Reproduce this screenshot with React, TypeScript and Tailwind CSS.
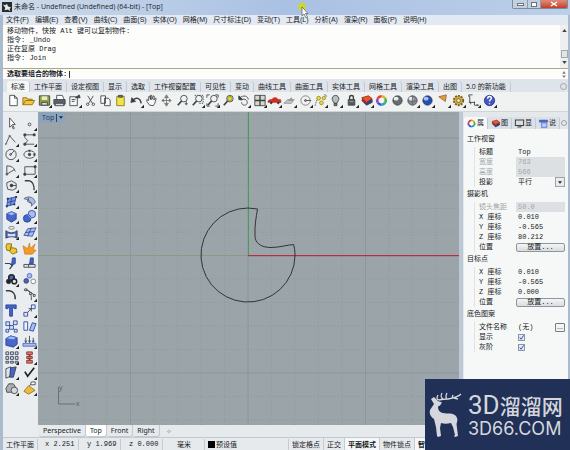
import React from 'react';

interface Tool {
  label: string;
  art: React.ReactNode;
  more?: boolean;
}

interface Field {
  label: string;
  value?: string;
  kind?: 'text' | 'disabled' | 'select' | 'button' | 'file' | 'check';
}

interface FieldGroup {
  title: string;
  fields: Field[];
}

const menus = [
  '文件(F)', '编辑(E)', '查看(V)', '曲线(C)', '曲面(S)', '实体(O)', '网格(M)',
  '尺寸标注(D)', '变动(T)', '工具(L)', '分析(A)', '渲染(R)', '面板(P)', '说明(H)',
];

const toolTabs = [
  '标准', '工作平面', '设定视图', '显示', '选取', '工作视窗配置', '可见性', '变动',
  '曲线工具', '曲面工具', '实体工具', '网格工具', '渲染工具', '出图', '5.0 的新功能',
];

const history = ['移动物件，快按 Alt 键可以复制物件:', '指令: _Undo', '正在复原 Drag', '指令: Join'];

const groups: FieldGroup[] = [
  {
    title: '工作视窗',
    fields: [
      { label: '标题', value: 'Top' },
      { label: '宽度', value: '763', kind: 'disabled' },
      { label: '高度', value: '566', kind: 'disabled' },
      { label: '投影', value: '平行', kind: 'select' },
    ],
  },
  {
    title: '摄影机',
    fields: [
      { label: '镜头焦距', value: '50.0', kind: 'disabled' },
      { label: 'X 座标', value: '0.010' },
      { label: 'Y 座标', value: '-0.565' },
      { label: 'Z 座标', value: '80.212' },
      { label: '位置', value: '放置...', kind: 'button' },
    ],
  },
  {
    title: '目标点',
    fields: [
      { label: 'X 座标', value: '0.010' },
      { label: 'Y 座标', value: '-0.565' },
      { label: 'Z 座标', value: '0.000' },
      { label: '位置', value: '放置...', kind: 'button' },
    ],
  },
  {
    title: '底色图案',
    fields: [
      { label: '文件名称', value: '(无)', kind: 'file' },
      { label: '显示', kind: 'check' },
      { label: '灰阶', kind: 'check' },
    ],
  },
];

const ink = '#3b4045';
const blue = '#4666c8';
const pale = '#a9bdf0';

const sphere = (fill: string, shine: string) => (
  <>
    <circle cx="8" cy="8" r="5" fill={fill} stroke="#2c2f36" strokeWidth="0.7" />
    <ellipse cx="6.5" cy="6" rx="2.6" ry="2" fill={shine} stroke="none" />
  </>
);

const magnifier = (
  <>
    <circle cx="9.5" cy="6" r="3.5" fill="#eef3f7" />
    <path d="M7 8.5 3 13" strokeWidth="1.8" />
  </>
);

const colorWheel = (
  <g fill="none" strokeWidth="2.6">
    <path d="M8 3.5a4.5 4.5 0 0 1 3.9 2.2" stroke="#e8b020" />
    <path d="M11.9 5.7a4.5 4.5 0 0 1 0 4.6" stroke="#46b23c" />
    <path d="M11.9 10.3A4.5 4.5 0 0 1 8 12.5" stroke="#28a3b4" />
    <path d="M8 12.5a4.5 4.5 0 0 1-3.9-2.2" stroke="#3658c8" />
    <path d="M4.1 10.3a4.5 4.5 0 0 1 0-4.6" stroke="#a83bb0" />
    <path d="M4.1 5.7A4.5 4.5 0 0 1 8 3.5" stroke="#dc3a2c" />
  </g>
);

const layersArt = (
  <>
    <path d="m3 8 5 5 6-3V7z" fill="#2c3f96" />
    <path d="m3 5 5 5 6-4-4-3z" fill="#e4572f" stroke="#a02318" />
    <path d="m3 5 5 5v2L3 7z" fill="#b8271c" stroke="none" />
  </>
);

const mainTools: Tool[] = [
  { label: '新建', art: <path d="M4 2.5h5l3 3v8H4zM9 2.5v3h3" fill="#fff" /> },
  { label: '打开', art: <path d="M2 12.5V5h4l1 1.5h5V8h2.5L12 12.5zM2 12.5 5 8h7" fill="#f2c53d" stroke="#8b6912" /> },
  { label: '保存', more: true, art: (<><path d="M2.5 3h11v10h-11z" fill="#8f9e39" /><path d="M5 3.5h6v4H5z" fill="#e4eac2" stroke="none" /><path d="M5 10h6v3H5z" fill="#d9dde0" /></>) },
  { label: '打印', art: (<><path d="M5 7V2.5h6L13 7" fill="#fff" /><path d="M2 7h12v5H2z" fill="#5c636b" /><path d="M4 11h8l1 2.5H3z" fill="#d8dcdf" /></>) },
  { label: '文件属性', more: true, art: (<><path d="M3 4h8v9.5H3z" fill="#f5f7f8" /><path d="M5 7h4M5 9h3M9 5l4-3 1 3z" fill="#454a50" /></>) },
  { label: '剪切', art: (<><path d="m5 3 5 8m1-8-5 8" /><circle cx="5" cy="12" r="1.3" /><circle cx="11" cy="12" r="1.3" /></>) },
  { label: '复制', art: <path d="M3 3h5v8H3zM7 5.5h4l2 2v6H7z" fill="#f8f9fa" /> },
  { label: '粘贴', art: (<><path d="M4 3.5h8v10H4z" fill="#f2e34a" stroke="#81751b" /><path d="M6 2.5h4v2H6z" fill="#777" /></>) },
  { label: '复原', more: true, art: (<><path d="M4 8c3-4 8-3 9 3" strokeWidth="1.6" /><path d="M2 10 3 5l4 4z" fill={ink} /></>) },
  { label: '平移', art: <path d="M6 13 3 9V7l2 1V4l1-1 1 4V2.5h1.3V7L10 3l1 .5-.5 4 1.5-2 1 .5-1.5 5-1.5 2.5z" fill="#f6f7f7" /> },
  { label: '旋转视图', art: <path d="M8 2v12M3 8h10M8 2 6 5h4zM8 14l-2-3h4zM3 8l2-1.5v3zM13 8l-2-1.5v3z" fill="#888" stroke="#777" /> },
  { label: '动态缩放', art: (<>{magnifier}<path d="M12 9v4M10.5 11.5h3" /></>) },
  { label: '框选缩放', more: true, art: (<><path d="M5 2.5h9V11H9" strokeDasharray="1.5 1" />{magnifier}</>) },
  { label: '缩放至范围', more: true, art: (<><path d="M2 5V2h3m6 0h3v3m0 6v3h-3M5 14H2v-3" />{magnifier}</>) },
  { label: '缩放选取', art: (<>{magnifier}<circle cx="9.5" cy="6" r="2.5" fill="#d8d72e" stroke="#8e8c28" /></>) },
  { label: '复原视图', more: true, art: (<><path d="M4 5c4-3 9-2 9 2m-8 1c3-3 7-1 7 2 0 4-6 4-6 0" /><path d="M3 3v4h4z" fill={ink} /></>) },
  { label: '四个视窗', more: true, art: (<><path d="M3 2.5h11v11H3z" fill="#d6d8ca" /><path d="M8.5 2.5v11M3 8h11" strokeWidth="1.4" /></>) },
  { label: '车辆', more: true, art: (<><path d="M1 8.5 3 7h2l2-2h3l2 2h2.5l.5 3H1z" fill="#d82d24" stroke="#a12620" strokeWidth="0.5" /><circle cx="4.5" cy="10.5" r="1" fill="#222" /><circle cx="12" cy="10.5" r="1" fill="#222" /></>) },
  { label: '工作平面', more: true, art: <path d="m2 11 4-4h7l-3 4zM7 8l3-3 1 3z" fill="#c3c7ca" stroke="#8d9296" /> },
  { label: '物件锁点', more: true, art: (<><circle cx="8" cy="8" r="5" stroke="#777" /><path d="M8 8h6" /><circle cx="8" cy="8" r="1" fill="#999" /></>) },
  { label: '选取', more: true, art: (<><path d="M5 5 2 14M12 2h2v3" strokeDasharray="1.5 1" /><circle cx="6" cy="5.5" r="2" fill="#f2dc3c" stroke="#958827" /><circle cx="11.5" cy="5.5" r="1.8" fill="#f2dc3c" stroke="#958827" /><circle cx="9" cy="10.5" r="2" fill="#f2dc3c" stroke="#958827" /></>) },
  { label: '隐藏', more: true, art: (<><path d="M6.5 11 4.5 7a3.6 3.6 0 1 1 7 0l-2 4z" fill="#b8bfc3" /><path d="M6.5 11h3v2.5h-3z" fill="#777" /></>) },
  { label: '锁定', more: true, art: (<><path d="M6 7V4.5C6 2 10 2 10 4.5V7" strokeWidth="1.5" /><path d="M4.5 7h7v6h-7z" fill="#555b60" /><path d="M6 9h4" stroke="#aaa" /></>) },
  { label: '图层', more: true, art: layersArt },
  { label: '物件属性', art: colorWheel },
  { label: '着色', art: sphere('#666b70', '#e8ebed') },
  { label: '渲染', more: true, art: (<>{sphere('#858b91', '#e4e7e9')}<path d="M3.5 8c3 2 6 2 9 0M8 3v10" stroke="#62676b" /></>) },
  { label: '渲染模式', more: true, art: sphere('#244db8', '#a2c6f6') },
  { label: '聚光灯', more: true, art: <path d="m3 4 8-2-1 7z" fill="#e99b35" stroke="#8c653a" /> },
  { label: '选项', more: true, art: (<><circle cx="8" cy="8" r="5" fill="#d3ac42" stroke="#746127" strokeWidth="2" strokeDasharray="2 1.2" /><circle cx="8" cy="8" r="2" fill="#eee" stroke="#6f5b24" /></>) },
  { label: '尺寸标注', more: true, art: <path d="M3 4V2h4M4 3v7h5v3h5M3 10h2v2M9 9v2m3 1v2" /> },
  { label: '说明', more: true, art: (<><circle cx="8" cy="8" r="5.5" fill="#4356c3" stroke="#2b367e" /><path d="M6 6c0-3 4-3 4-.5C10 7 8 7 8 9m0 2v1" stroke="#fff" strokeWidth="1.5" /></>) },
];

const sideTools: Tool[] = [
  { label: '取消选取', art: <path d="M6 2v10l2-2 2 4 1-1-2-4h3z" fill="#fff" /> },
  { label: '点', more: true, art: <circle cx="8" cy="9" r="1.5" /> },
  { label: '多重直线', more: true, art: <path d="m2 13 4-9 6 7M5 4h2M2 12v2" /> },
  { label: '控制点曲线', more: true, art: (<><path d="M3 3h10M3 3v3l3 3-3 4h10" /><path d="M2 2h2v2H2zm10 0h2v2h-2zM2 12h2v2H2z" fill={ink} /></>) },
  { label: '圆', more: true, art: (<><circle cx="7.5" cy="8" r="5.5" /><path d="m7 8 4-4" /><circle cx="7" cy="8" r="1" /></>) },
  { label: '椭圆', more: true, art: (<><ellipse cx="8" cy="8" rx="6" ry="4" /><circle cx="8" cy="8" r="1.3" fill={ink} /><path d="M8 3v2m5 2v2" strokeWidth="2" /></>) },
  { label: '圆弧', more: true, art: (<><path d="M3 3c5 0 8 2 9 6M3 3v9l8-5" /><circle cx="3" cy="12" r="1" /></>) },
  { label: '矩形', more: true, art: (<><path d="M3 4h11v8H3z" /><path d="M2 11h2v2H2zM13 3h2v2h-2z" fill={ink} /></>) },
  { label: '多边形', more: true, art: (<><path d="m3 5 5-2 5 3v5l-4 2-5-1-1-4z" /><circle cx="8" cy="8" r="1.5" fill={ink} /><path d="M8 8h5" /></>) },
  { label: '曲线圆角', more: true, art: <path d="M3 3h5c4 1 5 4 5 10" strokeWidth="1.5" /> },
  { label: '曲面', more: true, art: (<><path d="m4 5 9-2-2 8-8 2z" fill="#7d97e2" stroke="#26449d" /><path d="M8 4 7 12M4 9l8-2" stroke="#26449d" /><path d="M3 4h2v2H3zm9-2h2v2h-2zM2 12h2v2H2zm8-2h2v2h-2z" fill="#26355f" stroke="none" /></>) },
  { label: '旋转成形', more: true, art: (<><path d="M2 5c5-4 12-1 12 4l-4 4c1-4-2-7-8-8" fill={pale} stroke="#55617f" /><path d="m7 4-1 4 4 2" /></>) },
  { label: '立方体', more: true, art: (<><path d="m3 5 5-2 5 2v6l-5 3-5-3z" fill={blue} stroke="#233f99" /><path d="m3 5 5 2 5-2-5-2z" fill={pale} stroke={blue} /></>) },
  { label: '布尔运算', more: true, art: (<><circle cx="10.5" cy="5.5" r="4" fill={pale} stroke="#2e469c" /><circle cx="5.5" cy="10" r="4" fill={blue} stroke="#233f99" /><path d="m6 6 4 4" stroke={pale} /></>) },
  { label: '投影曲线', more: true, art: (<><ellipse cx="8" cy="3" rx="3" ry="1.5" stroke="#777" /><path d="M2 6c4 3 8 3 12 0v8c-4-2-8-2-12 0z" fill={blue} /><path d="M4 9c3 1 5 1 8 0v3H4z" fill="#dce3fa" stroke="none" /></>) },
  { label: '网格', more: true, art: (<><path d="m2 11 4-7 9-1-4 9z" fill={pale} stroke="#3a4f8e" /><path d="m4 8 9-1M6 12l4-9" stroke="#26449d" /></>) },
  { label: '组合', art: (<><path d="M3 3h5v3H7v4H3L2 6z" fill="#f2c62f" stroke="#816717" /><path d="m8 7 5 1 1 4-5 2-3-3z" fill="#f2c62f" stroke="#816717" /></>) },
  { label: '炸开', art: <path d="M3 14 1 5l5 3 2-6 1 6 5-5-2 6 3 1-4 4z" fill="#f29c25" stroke="#c47017" strokeWidth="0.6" /> },
  { label: '修剪', art: (<><path d="M9 2h3v6l-4 2z" fill={blue} stroke="#233f99" /><path d="M1 8h5l3 2-3 4" strokeWidth="1.3" /></>) },
  { label: '分割', art: (<><path d="M9 2h3v6l-4 1z" fill={blue} stroke="#233f99" /><path d="M2 9h12v3H2z" fill="#dfe4ee" /><path d="M7 9v3" /></>) },
  { label: '群组', more: true, art: (<><circle cx="8" cy="6" r="3" fill={blue} stroke="#222" strokeWidth="1.6" /><circle cx="5" cy="10" r="2.5" fill="#222" /><circle cx="11" cy="10" r="2.5" fill="#e4e7ed" stroke="#222" strokeWidth="1.6" /></>) },
  { label: '解散群组', art: (<><circle cx="8" cy="4" r="2.5" fill={pale} stroke={blue} /><circle cx="4.5" cy="9.5" r="2.5" fill={blue} /><circle cx="12" cy="10" r="2.5" fill="#fff" stroke="#777" /></>) },
  { label: '编辑点', art: <path d="M2 4h4c5 1 6 4 6 9" strokeWidth="1.7" /> },
  { label: '控制点', more: true, art: (<><path d="M2 3c7 0 8 4 8 11M4 2l10 7" /><path d="M3 2h2v2H3zm5 4h2v2H8zm4 2h2v2h-2z" fill="#fff" /></>) },
  { label: '文字物件', art: <path d="M2 2h11v4h-2V5H9v9H6V5H4v1H2z" fill={blue} stroke="#233f99" /> },
  { label: '移动', more: true, art: (<><path d="M2 10h4v4H2zM10 2h4v4h-4z" fill="#e3e8f8" stroke="#26449d" /><path d="m6 10 4-4M7 6h3v3" /></>) },
  { label: '复制物件', art: (<><path d="m4 4 8 8m0-8-8 8" /><path d="M2 3h4v4H2zm8-1h4v4h-4zM6 7h4v4H6zm-4 4h3v3H2zm9 0h3v3h-3z" fill="#d9e1f9" stroke="#26449d" /></>) },
  { label: '旋转', art: (<><path d="M2 3h4v9H2z" fill="#eef1f8" stroke="#26449d" /><path d="m8 12 3-8 4 1-3 8z" fill={pale} stroke="#26449d" /></>) },
  { label: '实体编辑', more: true, art: (<><path d="m2 5 5-3 7 2v7l-4 3-8-2z" fill={blue} stroke="#233f99" /><path d="m2 5 8 1 4-2-7-2z" fill={pale} stroke={blue} /></>) },
  { label: '对齐', more: true, art: (<><path d="M1 10h14v3H1z" fill={pale} stroke={blue} /><path d="M4 9V4m4 5V2m4 7V4M3 7l1 2 1-2m2 0 1 2 1-2m2 0 1 2 1-2" /></>) },
  { label: '阵列', more: true, art: <path d="M2 2h3v3H2zm5 0h3v3H7zm5 0h3v3h-3zM2 7h3v3H2zm5 0h3v3H7zm5 0h3v3h-3zM2 12h3v2H2zm5 0h3v2H7zm5 0h3v2h-3z" fill="#d9dfef" stroke="#333b53" /> },
  { label: '分析', more: true, art: (<><path d="M8 4v8" strokeWidth="2" stroke="#923530" /><path d="M5 2h6v3H5zm0 5h6v2H5zm0 4h6v3H5z" fill="#e0786d" stroke="#7f3030" /></>) },
  { label: '剖面', more: true, art: (<><path d="m2 4 5-2v10l-5 2z" fill="#dce3f5" /><path d="m7 3 6-1-3 11H6z" fill={blue} /></>) },
  { label: '检查', more: true, art: <path d="m3 7 3 5 7-9" strokeWidth="1.8" stroke="#202328" /> },
  { label: '着色物件', more: true, art: (<><path d="m2 8 3-5h5l2 3-2 6H3z" fill="#abb2b5" /><circle cx="11" cy="10" r="3.5" fill="#d6dadb" /></>) },
  { label: '标签', more: true, art: (<><path d="m2 11 5-6 7 5-7 4z" fill="#eebc3c" stroke="#957027" /><path d="M9 4h5V1h-4zM8 5l1-1" fill="#fff" /></>) },
];

const panelTabs = [
  { label: '属', art: colorWheel },
  { label: '图', art: layersArt },
  { label: '显', art: (<><path d="M2 3h12v8H2z" fill="#d9dddc" strokeWidth="1.5" /><path d="M6 11h4v2H5h6" /></>) },
  { label: '说', art: (<><path d="M2 3h12v3H2z" fill={blue} stroke={blue} /><path d="M5 7h8v7H5z" fill={pale} stroke={blue} /><path d="M7 10h4" stroke="#fff" /></>) },
];

const Glyph: React.FC<{ art: React.ReactNode; more?: boolean }> = ({ art, more }) => (
  <svg viewBox="0 0 16 16" className="h-full w-full" fill="none" stroke={ink} strokeWidth="0.9" aria-hidden="true">
    {art}
    {more && <path d="M16 12.5V16h-3.5z" fill="#222" stroke="none" />}
  </svg>
);

const ToolButton: React.FC<{ tool: Tool }> = ({ tool }) => (
  <button type="button" title={tool.label} aria-label={tool.label} className="size-[15px] shrink-0">
    <Glyph art={tool.art} more={tool.more} />
  </button>
);

const TitleBar = () => (
  <header className="flex h-[15px] shrink-0 items-start justify-between bg-linear-to-r from-[#cfdbea] via-[#a9c1e3] to-[#bccfe8] pl-[2px]">
    <div className="flex items-center gap-[2px] pt-px">
      <svg viewBox="0 0 12 12" className="size-[10px]" aria-hidden="true">
        <path d="M0 0h12v12H0z" fill="#252d2c" />
        <path d="m1 3 3 1 2-2 1 3 4 2-2 1 1 3-3-2-4 1 1-3z" fill="#e8ecea" />
      </svg>
      <h1 className="text-[7px] leading-[12px] text-[#20252c]">未命名 - Undefined (Undefined) (64-bit) - [Top]</h1>
    </div>
    <div className="mr-[2px] flex h-[9px] overflow-hidden rounded-b-[2px] border border-t-0 border-[#7d8b9e] text-white">
      <button type="button" aria-label="最小化" className="flex w-[15px] items-center justify-center border-r border-[#8d9bae] bg-[#c5d0de]">
        <span className="h-[3px] w-[7px] border border-[#69737e] bg-white" />
      </button>
      <button type="button" aria-label="还原" className="flex w-[13px] items-center justify-center border-r border-[#8d9bae] bg-[#c5d0de]">
        <span className="h-[5px] w-[6px] border border-[#69737e] bg-white" />
      </button>
      <button type="button" aria-label="关闭" className="flex w-[26px] items-center justify-center bg-linear-to-b from-[#dc8d7c] to-[#c63b25]">
        <svg viewBox="0 0 8 6" className="h-[6px] w-[8px]"><path d="m1 1 6 4m0-4L1 5" stroke="#fff" strokeWidth="1.5" /></svg>
      </button>
    </div>
  </header>
);

const CommandArea = () => (
  <section className="shrink-0 bg-[#fdfefc] font-['Liberation_Mono','Noto_Sans_CJK_SC',monospace]">
    <div className="flex h-[44px] border-b border-[#a8aa80]">
      <div className="flex-1 pt-[2px] pl-[4px] text-[7px] leading-[9px]">
        {history.map((line) => (
          <p key={line} className="h-[9px] whitespace-pre">{line}</p>
        ))}
      </div>
      <div className="flex w-[8px] flex-col items-center justify-between bg-[#eef0ef] py-[4px]" aria-hidden="true">
        <svg viewBox="0 0 6 4" className="h-[3px] w-[5px]"><path d="m3 0 3 4H0z" fill="#444" /></svg>
        <span className="mt-[14px] h-[8px] w-[7px] border border-[#a4a9ad] bg-[#e2e5e7]" />
        <svg viewBox="0 0 6 4" className="h-[3px] w-[5px]"><path d="m3 4 3-4H0z" fill="#444" /></svg>
      </div>
    </div>
    <div className="flex h-[10px] items-center pl-[4px] text-[7px] leading-[9px]">
      <label htmlFor="command" className="font-bold whitespace-nowrap">选取要组合的物体:</label>
      <span className="ml-[2px] h-[7px] w-px bg-[#333]" />
      <input id="command" className="min-w-0 flex-1 bg-transparent outline-none" />
      <svg viewBox="0 0 6 8" className="mr-px h-[7px] w-[6px]" aria-hidden="true">
        <path d="m3 0 2 3H1zM3 8l2-3H1z" fill="#777" />
      </svg>
    </div>
  </section>
);

const range = (from: number, to: number) => Array.from({ length: to - from + 1 }, (_, i) => from + i);

const Viewport = () => (
  <main className="relative min-h-0 flex-1 overflow-hidden bg-[#9ba4a8]">
    <svg viewBox="0 0 421 313" preserveAspectRatio="xMidYMid slice" className="absolute inset-0 h-full w-full" fill="none">
      {range(-9, 9).map((n) => (
        <path key={`v${n}`} d={`M${210 + n * 23.5} 0v313`} stroke={n % 5 ? '#8a9499' : '#84919b'} strokeDasharray={n % 5 ? '1 2' : undefined} strokeWidth="0.7" />
      ))}
      {range(-6, 7).map((n) => (
        <path key={`h${n}`} d={`M0 ${143.5 + n * 23.5}h421`} stroke={n % 5 ? '#8a9499' : '#84919b'} strokeDasharray={n % 5 ? '1 2' : undefined} strokeWidth="0.7" />
      ))}
      <path d="M0 143.5h210" stroke="#8c9988" />
      <path d="M210.5 0v143" stroke="#4a9d51" />
      <rect x="210" y="143" width="211" height="1.2" fill="#b5303f" />
      <path
        d="M219.5 97A47 47 0 1 0 257 143.5C257 139 256.5 136 255.5 132.5C249 133 241 135.5 233 135.5C223 135.5 217 131 217 124C216.5 114 218 106 219.5 97Z"
        stroke="#23292c"
        strokeWidth="0.9"
      />
      <path d="M20.5 275v17h17" stroke="#697277" />
      <text x="21" y="278" fontSize="7" fill="#596267">y</text>
      <text x="38" y="294" fontSize="7" fill="#596267">x</text>
    </svg>
    <button type="button" className="relative flex h-[11px] items-center gap-[2px] bg-[#8ca3b9] pr-[2px] pl-[4px] text-[7px] leading-[10px] text-[#1c3c61]">
      Top
      <span className="h-[8px] w-px bg-[#2b4662]" />
      <svg viewBox="0 0 6 4" className="h-[3px] w-[4px]" aria-hidden="true"><path d="M0 0h6L3 4z" fill="#17283b" /></svg>
    </button>
  </main>
);

const FieldValue: React.FC<{ field: Field; id: string }> = ({ field, id }) => {
  switch (field.kind) {
    case 'select':
      return (
        <div className="relative flex min-w-0 flex-1 items-center">
          <select id={id} className="h-[10px] w-full appearance-none bg-transparent pl-[2px] outline-none">
            <option>{field.value}</option>
          </select>
          <span className="pointer-events-none absolute right-[3px] flex h-[10px] w-[10px] items-center justify-center border border-[#9da3a7] bg-[#e9ecee]">
            <svg viewBox="0 0 6 4" className="h-[3px] w-[4px]"><path d="M0 0h6L3 4z" fill="#222" /></svg>
          </span>
        </div>
      );
    case 'button':
      return (
        <button id={id} type="button" className="mr-[3px] h-[9px] min-w-0 flex-1 rounded-[2px] border border-[#8f969b] bg-linear-to-b from-[#f4f5f6] to-[#d8dcdf] leading-[7px]">
          {field.value}
        </button>
      );
    case 'file':
      return (
        <div className="flex min-w-0 flex-1 items-center justify-between pr-[3px] pl-[2px]">
          <output id={id}>{field.value}</output>
          <button type="button" aria-label="浏览" className="flex h-[9px] w-[10px] justify-center rounded-[1px] border border-[#777f85] bg-[#f2f3f4] font-['Liberation_Sans',sans-serif] leading-[6px]">...</button>
        </div>
      );
    case 'check':
      return (
        <span className="relative ml-[2px] flex size-[7px]">
          <input id={id} type="checkbox" defaultChecked className="peer size-[7px] appearance-none border border-[#8b98a9] bg-[#e2e9f5]" />
          <svg viewBox="0 0 8 8" className="pointer-events-none absolute inset-0 hidden peer-checked:block"><path d="m2 4 1.5 2 3-4.5" fill="none" stroke="#29479a" /></svg>
        </span>
      );
    default:
      return (
        <input
          id={id}
          defaultValue={field.value}
          disabled={field.kind === 'disabled'}
          className="mr-[3px] h-[10px] min-w-0 flex-1 bg-transparent pl-[2px] outline-none disabled:bg-[#dce0e3] disabled:text-[#a2a7aa]"
        />
      );
  }
};

const PropertiesPanel = () => (
  <aside className="flex w-[109px] shrink-0 flex-col border-l-4 border-[#bcc8d5] bg-[#e4e8ea] pt-[5px] pl-px">
    <div role="tablist" className="flex h-[12px] items-center">
      {panelTabs.map((tab, i) => (
        <button
          key={tab.label}
          type="button"
          role="tab"
          aria-selected={i === 0}
          className="flex h-full w-[24px] items-center rounded-t-[2px] border-r border-[#c2cad3] bg-[#dce1e8] pl-[2px] text-[7px] leading-[10px] aria-selected:bg-[#f8fafa]"
        >
          <span className="size-[11px]"><Glyph art={tab.art} /></span>
          {tab.label}
        </button>
      ))}
      <button type="button" aria-label="面板选项" className="ml-px size-[6px] rounded-full border border-[#9ca3a9]" />
    </div>
    <div className="flex-1 bg-[#f6f8f7] pt-[3px] font-['Liberation_Mono','Noto_Sans_CJK_SC',monospace] text-[7px] leading-[10px]">
      {groups.map((group, g) => (
        <fieldset key={group.title} className="min-w-0">
          <legend className="h-[15px] w-full pl-[3px] leading-[15px]">{group.title}</legend>
          {group.fields.map((field, f) => (
            <div key={field.label} className="ml-[10px] flex h-[10px] items-center border-l border-[#e0e3e4]">
              <label
                htmlFor={`field-${g}-${f}`}
                className={field.kind === 'disabled' ? 'w-[41px] shrink-0 pl-[4px] text-[#a2a7aa]' : 'w-[41px] shrink-0 pl-[4px]'}
              >
                {field.label}
              </label>
              <FieldValue field={field} id={`field-${g}-${f}`} />
            </div>
          ))}
        </fieldset>
      ))}
    </div>
  </aside>
);

const StatusBar = () => (
  <footer className="flex h-[13px] shrink-0 items-center border-t border-[#c0c8d0] bg-[#e6eaed] text-[7px] leading-[11px] whitespace-nowrap">
    <button type="button" className="w-[35px] border-r border-[#c5cbd0] pl-[3px] text-left">工作平面</button>
    <span className="w-[41px] border-r border-[#c5cbd0] pl-[7px] font-['Liberation_Mono',monospace]">x 2.251</span>
    <span className="w-[42px] border-r border-[#c5cbd0] pl-[8px] font-['Liberation_Mono',monospace]">y 1.969</span>
    <span className="w-[42px] border-r border-[#c5cbd0] pl-[8px] font-['Liberation_Mono',monospace]">z 0.000</span>
    <span className="w-[42px] border-r border-[#c5cbd0] pl-[14px]">毫米</span>
    <button type="button" className="flex w-[84px] items-center gap-px border-r border-[#c5cbd0] pl-[3px]">
      <span className="size-[7px] bg-black" />
      预设值
    </button>
    {['锁定格点', '正交', '平面模式', '物件锁点', '智慧轨迹'].map((name) => (
      <button
        key={name}
        type="button"
        aria-pressed={name === '平面模式' || name === '智慧轨迹'}
        className="h-full border-r border-[#c5cbd0] px-[3px] aria-pressed:bg-[#f5f7f8] aria-pressed:font-bold"
      >
        {name}
      </button>
    ))}
  </footer>
);

const Watermark = () => (
  <div className="absolute right-0 bottom-0 flex h-[71px] w-[145px] items-center gap-[5px] bg-[#203057] pl-[4px] text-[#d5d7dc]">
    <svg viewBox="0 0 34 46" className="h-[46px] w-[34px] shrink-0" aria-hidden="true">
      <path
        d="M2 7 5 5l4 4 4 1.5-2 3-2 1c0 4 2 6 5 6.5 5 1 10-.5 13 3 2 2.5 1.5 5 .5 8l1.5 12-3 1-1-1 1-1-2-8-2-4c-4 1-7 1-10 0l-1 5 1 8-3 1-1-1-1-9-2-8C2 25 0 22 1 18l4-6z"
        fill="currentColor"
      />
      <path d="M10 8c4-1 6-1 9-1 6-1 10-2 13-5M10 8C7 7 8 5 9 3m5 4c-3-2-2-4-1-6m5 6c-2-2-1-4 0-6m5 5 1-3m1 3 4 1" fill="none" stroke="currentColor" strokeWidth="1.3" />
    </svg>
    <div className="whitespace-nowrap">
      <p className="flex h-[28px] items-center font-['Roboto',sans-serif] text-[26px] leading-[26px]">
        3D<span className="font-['Noto_Sans_CJK_SC',sans-serif] text-[21px] leading-[24px] font-medium">溜溜网</span>
      </p>
      <p className="font-['Inter',sans-serif] text-[18px] leading-[20px]">3D66.COM</p>
    </div>
  </div>
);

export default function App() {
  return (
    <div className="relative flex h-screen w-full flex-col overflow-hidden bg-[#aabbd0] font-['Open_Sans','Noto_Sans_CJK_SC',sans-serif] text-[#16191c]">
      <TitleBar />
      <div className="mr-[2px] ml-[3px] flex min-h-0 flex-1 flex-col bg-[#e8ecee]">
        <nav className="flex h-[10px] shrink-0 items-center gap-[6px] bg-[#e3e9f3] pl-[3px] font-['Liberation_Sans','Noto_Sans_CJK_SC',sans-serif] text-[7px] leading-[10px] whitespace-nowrap">
          {menus.map((name) => (
            <button key={name} type="button">{name}</button>
          ))}
        </nav>
        <CommandArea />
        <div className="flex h-[13px] shrink-0 items-end justify-between bg-[#dfe4ea] pt-[2px] pl-[4px]">
          <div role="tablist" className="flex h-full text-[7px] leading-[10px] whitespace-nowrap">
            {toolTabs.map((name, i) => (
              <button
                key={name}
                type="button"
                role="tab"
                aria-selected={i === 0}
                className="rounded-t-[3px] border-r border-[#c3cad5] px-[4px] aria-selected:bg-[#f5f7f7]"
              >
                {name}
              </button>
            ))}
          </div>
          <button type="button" aria-label="工具列选项" className="mr-px mb-[2px] size-[7px] rounded-full border border-[#a0a6ab]" />
        </div>
        <div className="flex h-[20px] shrink-0 border-b border-[#d0d5d9] bg-[#f0f2f2]">
          <div className="flex w-[494px] items-start justify-between pt-px pl-[3px]">
            {mainTools.map((tool) => <ToolButton key={tool.label} tool={tool} />)}
          </div>
        </div>
        <div className="flex min-h-0 flex-1">
          <div className="w-[35px] shrink-0 bg-[#e9edef] pt-[4px]">
            <div className="grid h-[280px] grid-cols-2 content-between justify-items-center">
              {sideTools.map((tool) => <ToolButton key={tool.label} tool={tool} />)}
            </div>
          </div>
          <div className="flex min-w-0 flex-1 flex-col">
            <Viewport />
            <div role="tablist" className="flex h-[12px] shrink-0 bg-[#e6eaed] pl-px font-['Noto_Sans',sans-serif] text-[7px] leading-[11px]">
              {['Perspective', 'Top', 'Front', 'Right'].map((name) => (
                <button
                  key={name}
                  type="button"
                  role="tab"
                  aria-selected={name === 'Top'}
                  className="rounded-b-[3px] border-r border-b border-[#c2c9d0] px-[4px] aria-selected:bg-white"
                >
                  {name}
                </button>
              ))}
              <button type="button" aria-label="新增工作视窗" className="px-[6px] text-[#8d959c]">✧</button>
            </div>
          </div>
          <PropertiesPanel />
        </div>
        <StatusBar />
      </div>
      <svg viewBox="0 0 12 18" className="absolute top-[1px] left-[297px] h-[18px] w-[12px]" aria-hidden="true">
        <circle cx="5" cy="5.5" r="4" fill="#c8d53c" />
        <path d="M5 6v9l2-2 2 4 1.5-1-2-3.5H11z" fill="#fff" stroke="#555" strokeWidth="0.7" />
      </svg>
      <Watermark />
    </div>
  );
}
